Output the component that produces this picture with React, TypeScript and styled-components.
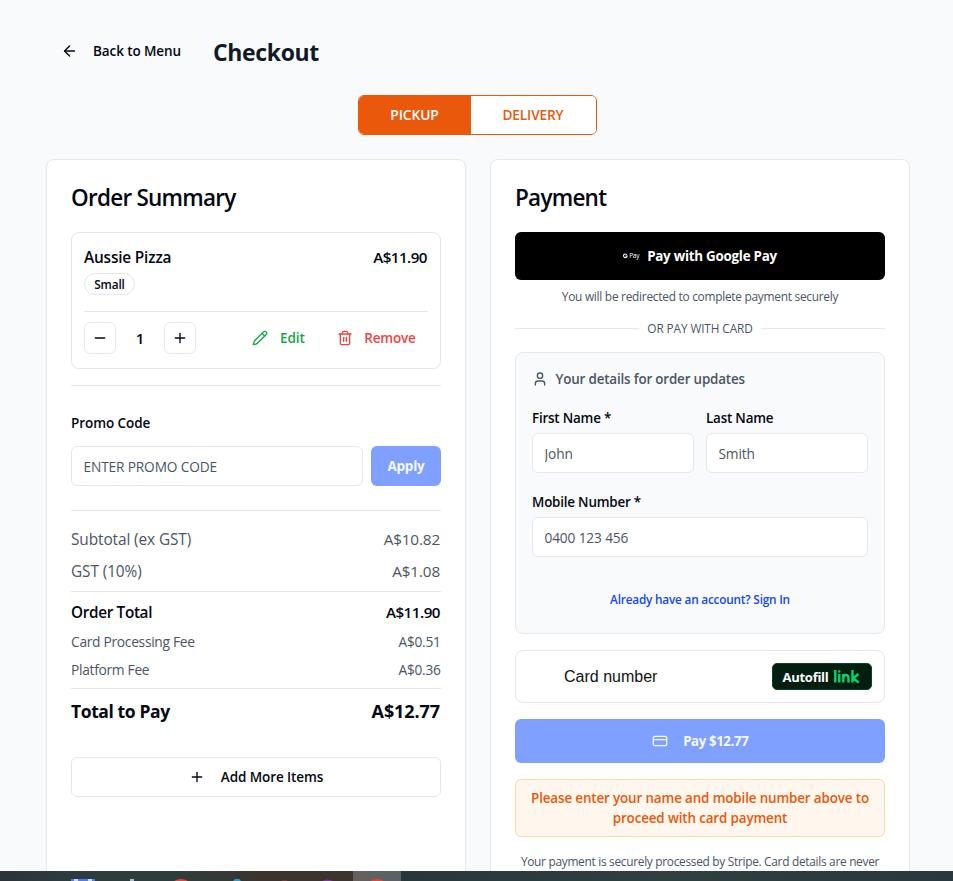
import React from 'react';
import styled, { createGlobalStyle, css } from 'styled-components';
import { ArrowLeft, CreditCard, Minus, Pencil, Plus, Trash2, User } from 'lucide-react';

const type = (size: number, weight = 400, spacing = 0) => css`
  font-size: ${size}px;
  font-weight: ${weight};
  letter-spacing: ${spacing}px;
`;

const c = {
  bg: '#f9fafb',
  line: '#e5e7eb',
  ink: '#030712',
  muted: '#4b5563',
  orange: '#ea580c',
  blue: '#80a0ff',
};

const GlobalStyle = createGlobalStyle`
  *, *::before, *::after { box-sizing: border-box; }
  body { margin: 0; overflow: hidden; font-family: "Open Sans", "Noto Sans", sans-serif; color: ${c.ink}; }
  button, input { font: inherit; color: inherit; }
  h1, h2, p { margin: 0; }
`;

const Screen = styled.div`
  display: flex;
  flex-direction: column;
  width: 953px;
  height: 881px;
  overflow: hidden;
  background: ${c.bg};
  white-space: nowrap;
`;

const Page = styled.main`
  flex: 1;
  min-height: 0;
  overflow: hidden;
  padding: 32px 0 0 46px;
`;

const Header = styled.header`
  display: flex;
  align-items: center;
  gap: 32px;
  height: 40px;
  padding-left: 15px;
`;

const BackLink = styled.button`
  display: flex;
  align-items: center;
  gap: 15px;
  width: 120px;
  padding: 0 0 2px;
  border: 0;
  background: none;
  ${type(13.5, 600, -0.1)}
`;

const PageTitle = styled.h1`
  ${type(23, 700, -0.35)}
  color: #111827;
`;

const Toggle = styled.div`
  display: flex;
  width: 239px;
  height: 40px;
  margin: 23px 0 24px 312px;
  border: 1px solid ${c.orange};
  border-radius: 6px;
  overflow: hidden;
`;

const ToggleOption = styled.button<{ $active?: boolean }>`
  flex: 0 0 ${p => (p.$active ? 112 : 125)}px;
  padding: 0 1px 2px 0;
  border: 0;
  background: ${p => (p.$active ? c.orange : '#fff')};
  color: ${p => (p.$active ? '#fff' : c.orange)};
  ${p => (p.$active ? type(13.8, 600, -0.1) : type(13.6, 600, -0.12))}
`;

const Columns = styled.div`
  display: grid;
  grid-template-columns: 420px 420px;
  gap: 24px;
`;

const Card = styled.section`
  height: 760px;
  padding: 24px;
  background: #fff;
  border: 1px solid ${c.line};
  border-radius: 8px;
  box-shadow: 0 1px 2px rgba(0, 0, 0, 0.04);
`;

const CardTitle = styled.h2`
  height: 48px;
  line-height: 27px;
  ${type(22.5, 600, -0.75)}
`;

const Item = styled.div`
  height: 137px;
  padding: 12px;
  border: 1px solid ${c.line};
  border-radius: 8px;
`;

const ItemHead = styled.div`
  display: flex;
  justify-content: space-between;
  height: 28px;
  line-height: 25px;
  ${type(15.4, 600, -0.18)}
`;

const ItemPrice = styled.span`
  padding-right: 1px;
  ${type(15.2, 600, -0.55)}
`;

const Badge = styled.span`
  display: flex;
  align-items: center;
  justify-content: center;
  width: 51px;
  height: 22px;
  border: 1px solid ${c.line};
  border-radius: 11px;
  ${type(11.8, 600, -0.15)}
`;

const ItemActions = styled.div`
  display: flex;
  align-items: center;
  height: 43px;
  margin-top: 16px;
  padding-top: 10px;
  border-top: 1px solid ${c.line};
`;

const StepButton = styled.button`
  display: flex;
  align-items: center;
  justify-content: center;
  width: 32px;
  height: 32px;
  padding: 0;
  background: #fff;
  border: 1px solid ${c.line};
  border-radius: 6px;
`;

const Quantity = styled.span`
  width: 48px;
  text-align: center;
  ${type(15, 600)}
`;

const TextAction = styled.button<{ $tone: 'edit' | 'remove' }>`
  display: flex;
  align-items: center;
  gap: ${p => (p.$tone === 'edit' ? 12 : 11.5)}px;
  margin-left: ${p => (p.$tone === 'edit' ? 56 : 32)}px;
  padding: 0 0 1px;
  border: 0;
  background: none;
  color: ${p => (p.$tone === 'edit' ? '#16a34a' : '#ef4444')};
  ${p => (p.$tone === 'edit' ? type(13.6, 600, -0.1) : type(13.5, 600, -0.2))}
`;

const Rule = styled.div<{ $before: number; $after: number }>`
  height: 1px;
  margin: ${p => p.$before}px 0 ${p => p.$after}px;
  background: ${c.line};
`;

const Label = styled.label<{ $tight?: boolean }>`
  display: block;
  height: 25px;
  line-height: 20px;
  ${p => (p.$tight ? type(13.4, 600, -0.2) : type(13.5, 600, -0.08))}
`;

const PromoLabel = styled(Label)`
  height: 33px;
`;

const PromoRow = styled.div`
  display: grid;
  grid-template-columns: 292px 70px;
  gap: 8px;
`;

const Input = styled.input`
  display: block;
  width: 100%;
  height: 40px;
  padding: 0 12px 0 11.5px;
  background: #fff;
  border: 1px solid ${c.line};
  border-radius: 6px;
  outline: 0;
  ${type(13.7, 400, -0.14)}
  &::placeholder { color: ${c.muted}; opacity: 1; }
`;

const ApplyButton = styled.button`
  padding: 0;
  border: 0;
  border-radius: 6px;
  background: ${c.blue};
  color: #f5f8ff;
  ${type(13.5, 700, -0.25)}
`;

const variants = {
  tax: css`height: 32px; padding-bottom: 2px; color: ${c.muted}; ${type(15.4, 400, -0.1)}`,
  total: css`height: 32px; ${type(15.3, 600, -0.33)}`,
  fee: css`height: 28px; padding-bottom: 2px; color: ${c.muted}; ${type(13.8, 400, -0.3)}`,
  grand: css`height: 28px; padding-bottom: 2px; ${type(17.5, 700, -0.4)}`,
};

const amounts = {
  tax: type(15.3, 400, -0.15),
  total: type(15.2, 600, -0.5),
  fee: type(13.7, 400, -0.28),
  grand: type(18, 700, -0.08),
};

type Kind = keyof typeof variants;

const Line = styled.div<{ $kind: Kind }>`
  display: flex;
  align-items: center;
  justify-content: space-between;
  ${p => variants[p.$kind]}
`;

const Amount = styled.span<{ $kind: Kind }>`
  padding-right: ${p => (p.$kind === 'fee' ? 0.5 : 1)}px;
  ${p => amounts[p.$kind]}
`;

const AddButton = styled.button`
  display: flex;
  align-items: center;
  justify-content: center;
  gap: 16px;
  width: 100%;
  height: 40px;
  margin-top: 31px;
  padding: 0 6px;
  background: #fff;
  border: 1px solid ${c.line};
  border-radius: 6px;
  ${type(13.5, 600, -0.1)}
`;

const GooglePayButton = styled.button`
  display: flex;
  align-items: center;
  justify-content: center;
  gap: 8px;
  width: 100%;
  height: 48px;
  border: 0;
  border-radius: 6px;
  background: #000;
  color: #fff;
  ${type(13.4, 700, -0.26)}
`;

const GooglePayMark = styled.span`
  display: flex;
  align-items: center;
  gap: 1.5px;
  width: 16px;
  height: 18px;
  padding-bottom: 1px;
  font: 400 6.5px "Open Sans", sans-serif;
  letter-spacing: -0.3px;
`;

const Note = styled.p<{ $last?: boolean }>`
  margin-top: ${p => (p.$last ? 15 : 7)}px;
  text-align: center;
  line-height: 18px;
  color: ${c.muted};
  ${p => (p.$last ? type(11.9, 400, -0.3) : type(11.9, 400, -0.27))}
`;

const OrRow = styled.div`
  display: flex;
  align-items: center;
  gap: 8px;
  height: 16px;
  margin: 15px 0 16px;
  color: ${c.muted};
  ${type(11.8, 400, -0.1)}
  &::before, &::after { content: ''; flex: 1; height: 1px; background: ${c.line}; }
`;

const Details = styled.div`
  height: 282px;
  padding: 16px;
  background: ${c.bg};
  border: 1px solid ${c.line};
  border-radius: 8px;
`;

const DetailsTitle = styled.div`
  display: flex;
  align-items: center;
  gap: 7.5px;
  height: 20px;
  margin-bottom: 19px;
  color: ${c.muted};
  ${type(13.4, 600, -0.17)}
`;

const NameGrid = styled.div`
  display: grid;
  grid-template-columns: 1fr 1fr;
  gap: 12px;
  margin-bottom: 19px;
`;

const SignIn = styled.a`
  display: block;
  margin-top: 33px;
  text-align: center;
  line-height: 18px;
  color: #1447f5;
  ${type(11.8, 600, -0.2)}
`;

const CardNumber = styled.div`
  display: flex;
  align-items: center;
  justify-content: space-between;
  height: 53px;
  margin: 16px 0;
  padding: 0 12px 0 48px;
  border: 1px solid ${c.line};
  border-radius: 8px;
  font: 16px "Liberation Sans", sans-serif;
  color: #111;
`;

const Autofill = styled.span`
  display: flex;
  align-items: center;
  justify-content: center;
  gap: 6px;
  width: 100px;
  height: 27px;
  padding-right: 1px;
  background: #011e0f;
  border: 1px solid #0a4425;
  border-radius: 5px;
  color: #fff;
  font-family: "Open Sans", sans-serif;
  ${type(13, 700, -0.27)}
`;

const PayButton = styled.button`
  display: flex;
  align-items: center;
  justify-content: center;
  gap: 15.5px;
  width: 100%;
  height: 44px;
  border: 0;
  border-radius: 6px;
  background: ${c.blue};
  color: #f5f8ff;
  ${type(13.3, 700, -0.4)}
`;

const Alert = styled.div`
  height: 58px;
  margin-top: 16px;
  padding-top: 8px;
  text-align: center;
  line-height: 20px;
  background: #fff7ed;
  border: 1px solid #fed7aa;
  border-radius: 6px;
  color: ${c.orange};
  ${type(13.4, 600, -0.13)}
`;

const Taskbar = styled.footer`
  flex: none;
  height: 10px;
  background: linear-gradient(90deg, #2b3336 0, #2d3b3c 60px, #2e3d3c 180px, #3b342e 260px, #3d342f 350px, #27373b 410px, #2f4040 660px, #29383c 953px);
  svg { display: block; }
`;

/* Link wordmark: upright strokes with an angular k. */
const LinkLogo = () => (
  <svg width="26" height="14" viewBox="0 0 26 14" fill="none" stroke="#00d66f" strokeWidth="2.4">
    <path d="M1.3 0v12.6M5.3 4v8.6M9.3 4v8.6M9.3 8.2c0-4.2 5.2-4.4 5.2 0v4.4M18.5 0v12.6M24.4 4 19.2 8.2l5.6 4.4" />
    <circle cx="5.3" cy="1.5" r="1.25" fill="#00d66f" stroke="none" />
  </svg>
);

const GoogleG = () => (
  <svg width="6" height="6" viewBox="0 0 10 10" fill="none" stroke="#fff" strokeWidth="2.2">
    <path d="M8.2 2A4 4 0 1 0 9 5.2H5.2" />
  </svg>
);

const TaskIcons = () => (
  <svg width="953" height="10">
    <rect x="353" width="48" height="10" fill="#fff" fillOpacity=".22" />
    <path d="M71 8h24v2H71z" fill="#4c7df0" />
    <path d="M74 8h4v2h-4zM88 8h4v2h-4z" fill="#c8d7f5" />
    <path d="M130 8h4v2h-4z" fill="#a9b9df" />
    <path d="M174 10q7-4 14 0zM370 10q7-4 14 0z" fill="#ea4335" />
    <path d="M233 10l2-2h4l2 2z" fill="#209fd5" />
    <path d="M282 9h5v1h-5z" fill="#713636" />
    <path d="M322 10q6-3 11 0z" fill="#8033a0" />
  </svg>
);

const Row = ({ kind, label, value }: { kind: Kind; label: string; value: string }) => (
  <Line $kind={kind}>
    <span>{label}</span>
    <Amount $kind={kind}>{value}</Amount>
  </Line>
);

const OrderSummary = () => (
  <Card>
    <CardTitle>Order Summary</CardTitle>
    <Item>
      <ItemHead>
        <span>Aussie Pizza</span>
        <ItemPrice>A$11.90</ItemPrice>
      </ItemHead>
      <Badge>Small</Badge>
      <ItemActions>
        <StepButton aria-label="Decrease"><Minus size={16} strokeWidth={2} /></StepButton>
        <Quantity>1</Quantity>
        <StepButton aria-label="Increase"><Plus size={16} strokeWidth={2} /></StepButton>
        <TextAction $tone="edit"><Pencil size={16} strokeWidth={2} />Edit</TextAction>
        <TextAction $tone="remove"><Trash2 size={16} strokeWidth={2} />Remove</TextAction>
      </ItemActions>
    </Item>
    <Rule $before={16} $after={27} />
    <PromoLabel>Promo Code</PromoLabel>
    <PromoRow>
      <Input placeholder="ENTER PROMO CODE" />
      <ApplyButton>Apply</ApplyButton>
    </PromoRow>
    <Rule $before={24} $after={13} />
    <Row kind="tax" label="Subtotal (ex GST)" value="A$10.82" />
    <Row kind="tax" label="GST (10%)" value="A$1.08" />
    <Rule $before={3} $after={4} />
    <Row kind="total" label="Order Total" value="A$11.90" />
    <Row kind="fee" label="Card Processing Fee" value="A$0.51" />
    <Row kind="fee" label="Platform Fee" value="A$0.36" />
    <Rule $before={4} $after={9} />
    <Row kind="grand" label="Total to Pay" value="A$12.77" />
    <AddButton><Plus size={16} strokeWidth={2} />Add More Items</AddButton>
  </Card>
);

const Payment = () => (
  <Card>
    <CardTitle>Payment</CardTitle>
    <GooglePayButton>
      <GooglePayMark><GoogleG />Pay</GooglePayMark>
      Pay with Google Pay
    </GooglePayButton>
    <Note>You will be redirected to complete payment securely</Note>
    <OrRow>OR PAY WITH CARD</OrRow>
    <Details>
      <DetailsTitle><User size={16} strokeWidth={2} />Your details for order updates</DetailsTitle>
      <NameGrid>
        <div><Label $tight>First Name *</Label><Input placeholder="John" /></div>
        <div><Label $tight>Last Name</Label><Input placeholder="Smith" /></div>
      </NameGrid>
      <Label $tight>Mobile Number *</Label>
      <Input placeholder="0400 123 456" />
      <SignIn>Already have an account? Sign In</SignIn>
    </Details>
    <CardNumber>
      Card number
      <Autofill>Autofill<LinkLogo /></Autofill>
    </CardNumber>
    <PayButton><CreditCard size={16} strokeWidth={2} />Pay $12.77</PayButton>
    <Alert>Please enter your name and mobile number above to<br />proceed with card payment</Alert>
    <Note $last>Your payment is securely processed by Stripe. Card details are never</Note>
  </Card>
);

export default function App() {
  return (
    <Screen>
      <GlobalStyle />
      <Page>
        <Header>
          <BackLink><ArrowLeft size={18} strokeWidth={1.9} />Back to Menu</BackLink>
          <PageTitle>Checkout</PageTitle>
        </Header>
        <Toggle>
          <ToggleOption $active>PICKUP</ToggleOption>
          <ToggleOption>DELIVERY</ToggleOption>
        </Toggle>
        <Columns>
          <OrderSummary />
          <Payment />
        </Columns>
      </Page>
      <Taskbar><TaskIcons /></Taskbar>
    </Screen>
  );
}
